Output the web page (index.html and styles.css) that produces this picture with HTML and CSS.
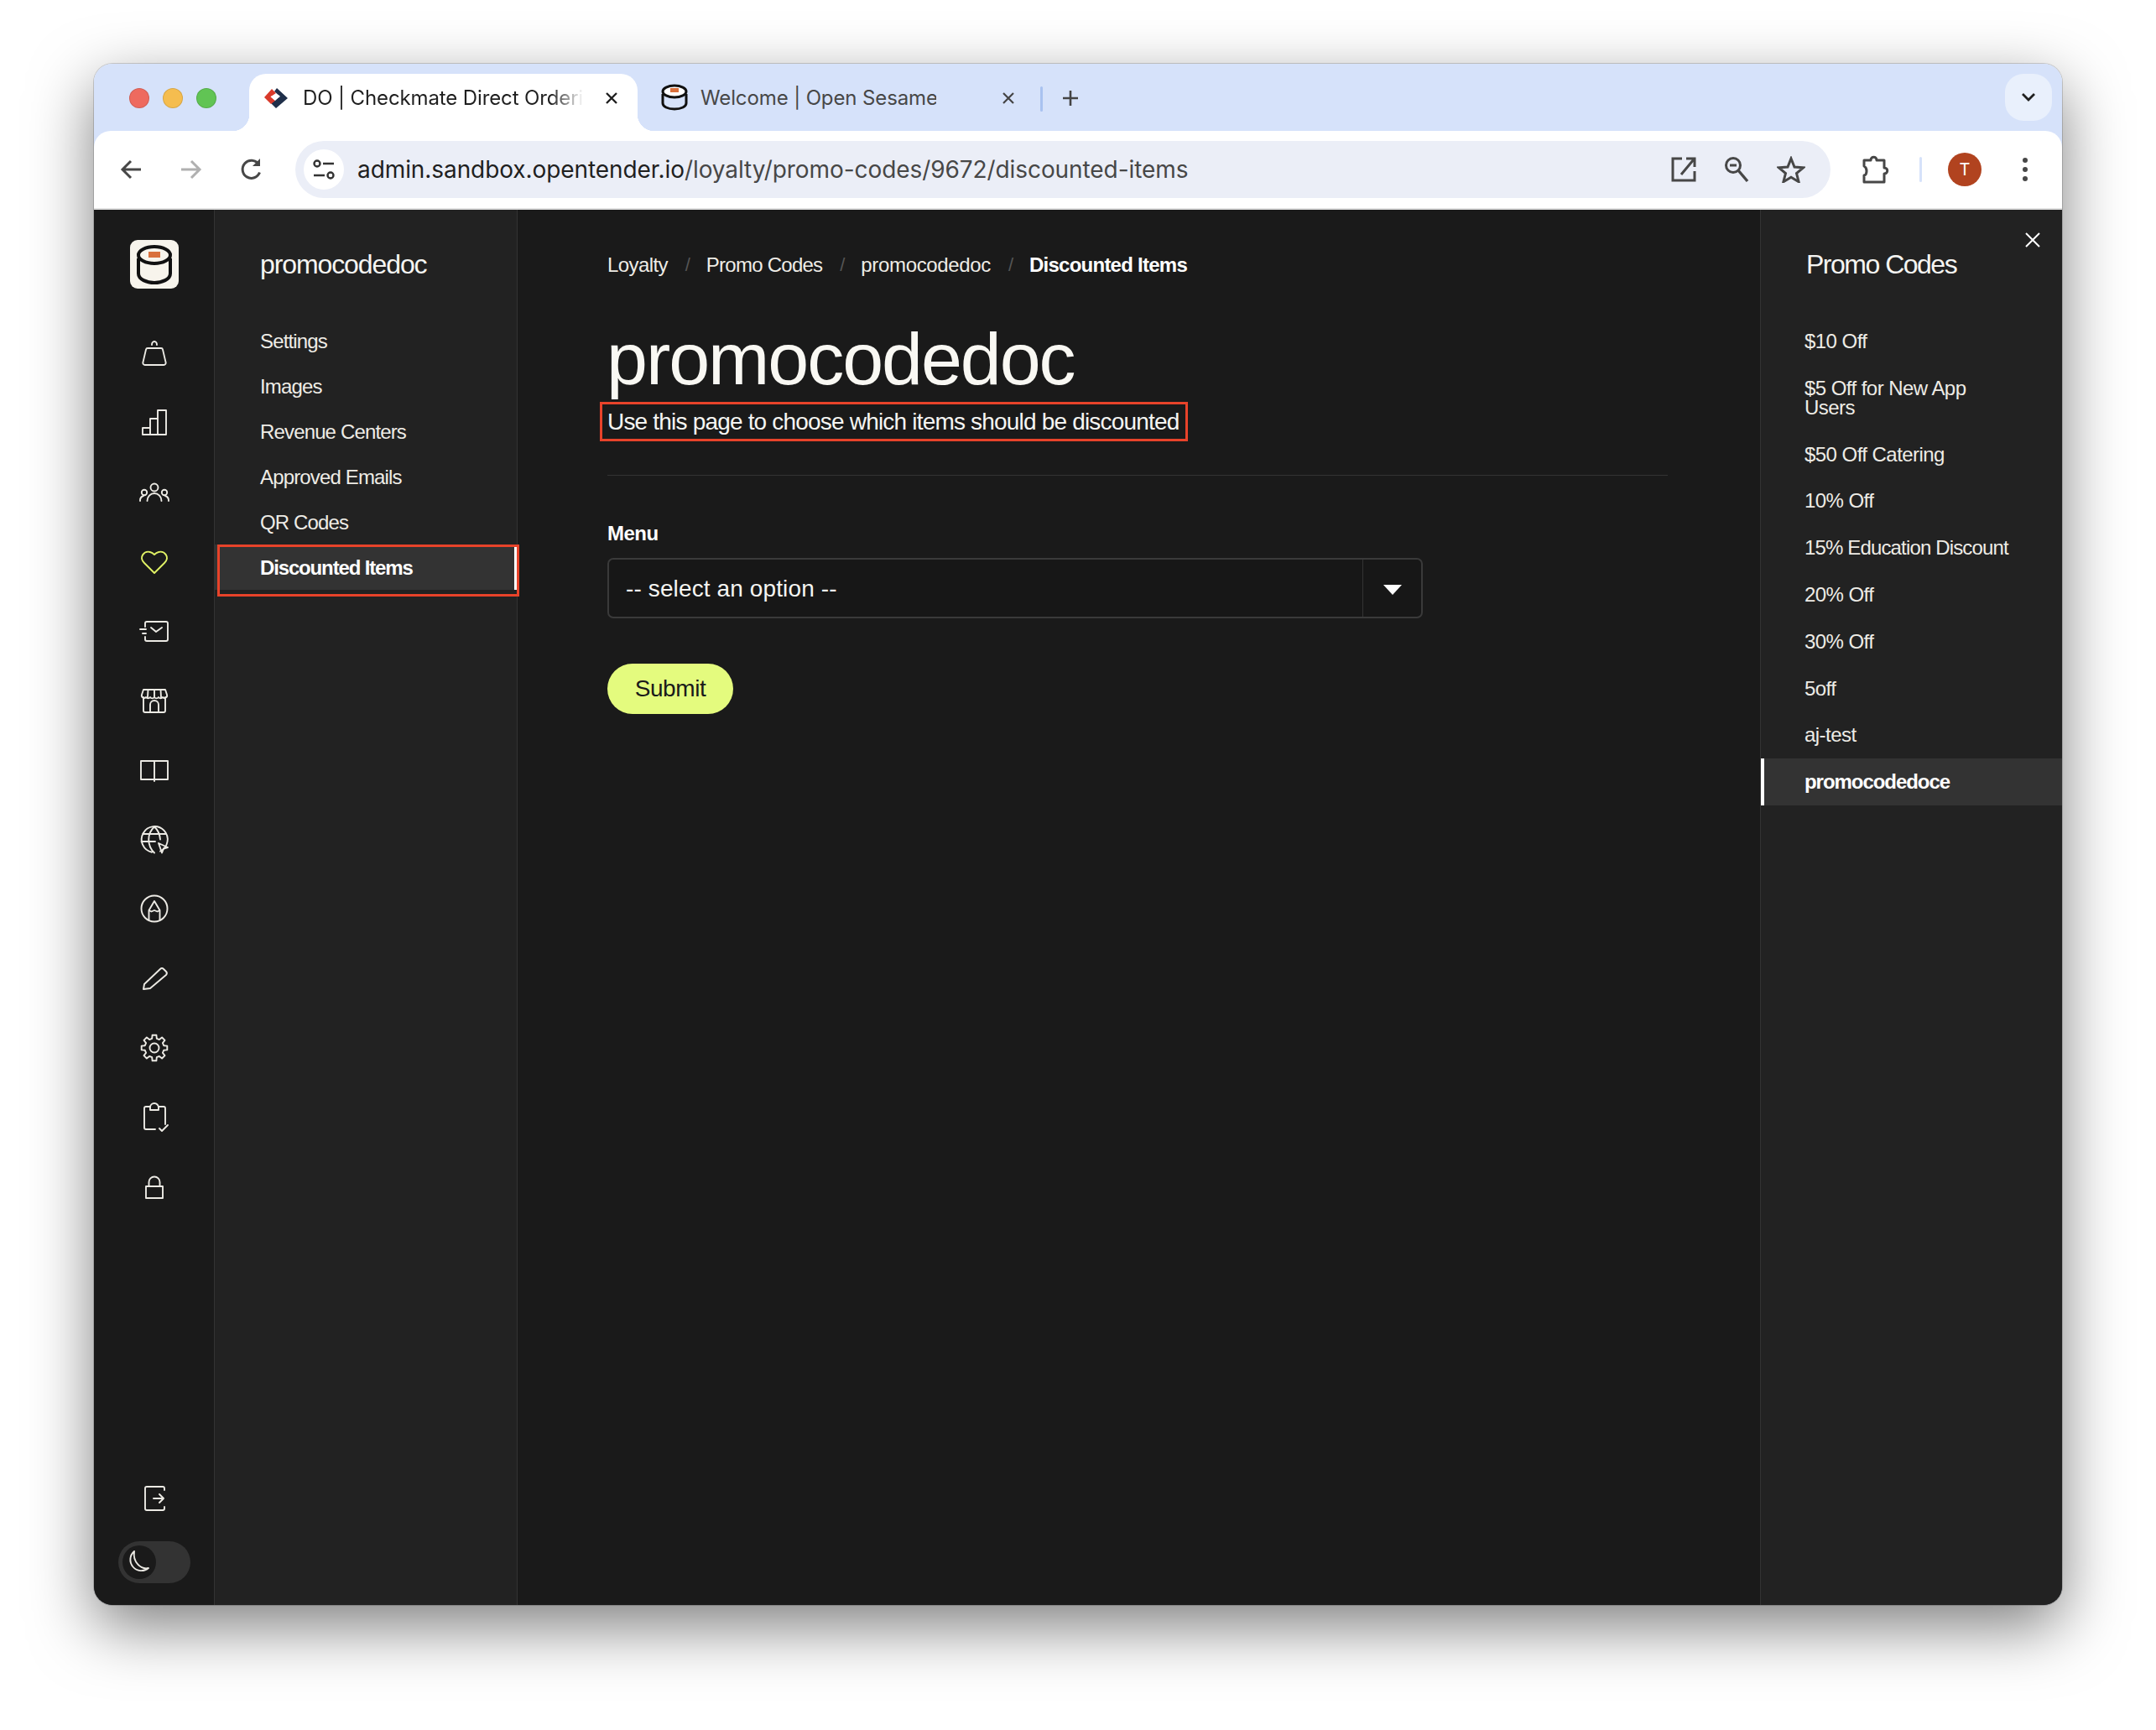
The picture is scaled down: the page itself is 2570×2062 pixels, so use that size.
FILE: index.html
```html
<!DOCTYPE html>
<html lang="en">
<head>
<meta charset="utf-8">
<title>Discounted Items</title>
<link rel="stylesheet" href="styles.css">
</head>
<body>
<div class="window">
  <header class="tabstrip">
    <div class="lights"><i class="light red"></i><i class="light yellow"></i><i class="light green"></i></div>
    <div class="tab active">
      <svg class="fav" width="28" height="26" viewBox="0 0 28 26"><path d="M15 1 28 13 14 25 8 19 19 11 12 5z" fill="#1f2f4a"/><path d="M9 2 14 7 8 11 13 16 8 20 0 12z" fill="#d93a2b"/><path d="M8 11l5 4 5-5" fill="none" stroke="#fff" stroke-width="1.500"/></svg>
      <span class="tab-title fade">DO | Checkmate Direct Orderi</span>
      <svg class="tab-x" width="16" height="16" viewBox="0 0 16 16"><path d="M2 2l12 12M14 2 2 14" stroke="#1f1f1f" stroke-width="2.400"/></svg>
    </div>
    <div class="tab">
      <svg class="fav2" width="34" height="32" viewBox="0 0 34 32"><ellipse cx="17" cy="9" rx="14" ry="7" fill="#fff" stroke="#111" stroke-width="3"/><rect x="12" y="5" width="10" height="5" fill="#d9703c"/><path d="M3 12v11c0 4 6 7 14 7s14-3 14-7V12" fill="none" stroke="#111" stroke-width="3"/></svg>
      <span class="tab-title muted">Welcome | Open Sesame</span>
      <svg class="tab-x second" width="16" height="16" viewBox="0 0 16 16"><path d="M2 2l12 12M14 2 2 14" stroke="#444" stroke-width="2.200"/></svg>
    </div>
    <i class="tab-sep"></i>
    <svg class="newtab" width="22" height="22" viewBox="0 0 22 22"><path d="M11 2v18M2 11h18" stroke="#444" stroke-width="2.600"/></svg>
    <div class="tabsearch"><svg width="20" height="14" viewBox="0 0 20 14"><path d="M3 3l7 7 7-7" fill="none" stroke="#1f1f1f" stroke-width="2.800"/></svg></div>
  </header>

  <div class="toolbar">
    <svg class="tool back" width="32" height="32" viewBox="0 0 32 32"><path d="M27 16H6M15 6 5 16l10 10" fill="none" stroke="#474747" stroke-width="3"/></svg>
    <svg class="tool fwd" width="32" height="32" viewBox="0 0 32 32"><path d="M5 16h21M17 6l10 10-10 10" fill="none" stroke="#b0b0b0" stroke-width="3"/></svg>
    <svg class="tool reload" width="32" height="32" viewBox="0 0 32 32"><path d="M25.500 19.500A10.500 10.500 0 1 1 24 9.500" fill="none" stroke="#474747" stroke-width="3"/><path d="M26 3v9h-9z" fill="#474747"/></svg>
    <div class="omnibox">
      <span class="site-chip"><svg width="28" height="26" viewBox="0 0 28 26"><circle cx="6" cy="6" r="3.500" fill="none" stroke="#333" stroke-width="2.400"/><path d="M13 6h13M2 20h13" stroke="#333" stroke-width="2.600"/><circle cx="22" cy="20" r="3.500" fill="none" stroke="#333" stroke-width="2.400"/></svg></span>
      <span class="url"><b>admin.sandbox.opentender.io</b>/loyalty/promo-codes/9672/discounted-items</span>
      <svg class="omni-icon" width="30" height="32" viewBox="0 0 30 32"><path d="M13 3H2v26h26V18M18 3h10v10M27 4 12 22" fill="none" stroke="#474747" stroke-width="3"/></svg>
      <svg class="omni-icon" width="30" height="32" viewBox="0 0 30 32"><circle cx="11" cy="11" r="8.500" fill="none" stroke="#474747" stroke-width="3"/><path d="M7 11h8" stroke="#474747" stroke-width="3"/><path d="M17 17l11 13" stroke="#474747" stroke-width="3.400"/></svg>
      <svg class="omni-icon" width="34" height="32" viewBox="0 0 34 32"><path d="M17 3l4 10 10.500.800-8 6.700 2.600 10.200L17 25.200 7.900 30.700l2.600-10.200-8-6.700L13 13z" fill="none" stroke="#474747" stroke-width="3" stroke-linejoin="miter"/></svg>
    </div>
    <svg class="tool ext" width="34" height="36" viewBox="0 0 34 36"><path d="M4 7h8c0-5 7-5 7 0h9v9c5 0 5 7 0 7v10H4v-8c4-1 4-9 0-11z" fill="none" stroke="#474747" stroke-width="3" stroke-linejoin="round"/></svg>
    <i class="tool-sep"></i>
    <span class="avatar">T</span>
    <svg class="tool kebab" width="8" height="32" viewBox="0 0 8 32"><circle cx="4" cy="5" r="3" fill="#474747"/><circle cx="4" cy="16" r="3" fill="#474747"/><circle cx="4" cy="27" r="3" fill="#474747"/></svg>
  </div>

  <div class="app">
    <nav class="rail">
      <div class="logo"><svg width="58" height="58" viewBox="0 0 58 58"><path d="M10 22v18c0 7 10 11 19 11s19-4 19-11V22" fill="none" stroke="#111" stroke-width="4"/><ellipse cx="29" cy="18" rx="19" ry="10" fill="#f7f4ec" stroke="#111" stroke-width="4"/><rect x="22" y="14" width="14" height="7" fill="#d9703c"/></svg></div>
      <div class="rail-icons">
        <svg class="ri" viewBox="0 0 40 40"><path d="M17 10a3 4 0 0 1 6 0M12 14h16a2 2 0 0 1 2 1.600l3.500 15a2.500 2.500 0 0 1-2.500 3.400H9a2.500 2.500 0 0 1-2.500-3.400l3.500-15a2 2 0 0 1 2-1.600z"/></svg>
        <svg class="ri" viewBox="0 0 40 40"><path d="M6 26h9v8H6zM15 15h9v19h-9zM24 5h10v29H24z"/></svg>
        <svg class="ri" viewBox="0 0 40 40"><circle cx="20" cy="14" r="4.500"/><path d="M11.500 30a8.500 9 0 0 1 17 0"/><circle cx="8" cy="20" r="3.200"/><path d="M3 30a6 6 0 0 1 4-6M37 30a6 6 0 0 0-4-6"/><circle cx="32" cy="20" r="3.200"/></svg>
        <svg class="ri lime" viewBox="0 0 40 40"><path d="M20 34 8 22c-7-7 0-15 7-13 2 .5 4 2 5 3 1-1 3-2.500 5-3 7-2 14 6 7 13z"/></svg>
        <svg class="ri" viewBox="0 0 40 40"><path d="M9 15v-4a2 2 0 0 1 2-2h23a2 2 0 0 1 2 2v19a2 2 0 0 1-2 2H11a2 2 0 0 1-2-2v-3M3 18h7M6 23h4M16 16l6 5 7-5"/></svg>
        <svg class="ri" viewBox="0 0 40 40"><path d="M7 16v16a2 2 0 0 0 2 2h22a2 2 0 0 0 2-2V16M15 34V25a5 5 0 0 1 10 0v9M7 7h26l2 6a3 3 0 0 1-5 3 3 3 0 0 1-5 0 3 3 0 0 1-5 0 3 3 0 0 1-5 0 3 3 0 0 1-5 0 3 3 0 0 1-5-3zM12.500 7l-.5 9M20 7v9M27.500 7l.5 9"/></svg>
        <svg class="ri" viewBox="0 0 40 40"><path d="M4 9h32v22H4zM20 9v24"/></svg>
        <svg class="ri" viewBox="0 0 40 40"><path d="M27 33.500a15.500 15.500 0 1 0-10 1.200M20 4.500c-9 8-9 22 0 31M20 4.500c4 3.500 6.500 9 7 15M6 13h28M4.500 22H21"/><path d="M25 24l11 5-5 1.500-2 5z"/></svg>
        <svg class="ri" viewBox="0 0 40 40"><circle cx="20" cy="20" r="15.500"/><path d="M13.500 34V22L20 11l6.500 11v12M13.500 22l3 1.500 3.500-1.500 3.500 1.500 3-1.500"/></svg>
        <svg class="ri" viewBox="0 0 40 40"><path d="M7 33l1-6L27 9a3 3 0 0 1 4 0l3 3a3 3 0 0 1 0 4L15 32z"/></svg>
        <svg class="ri" viewBox="0 0 40 40"><polygon points="17.200,8.800 17.600,4.700 22.400,4.700 22.800,8.800 25.900,10.100 29.100,7.500 32.500,10.900 29.900,14.100 31.200,17.200 35.300,17.600 35.300,22.400 31.200,22.800 29.900,25.900 32.500,29.100 29.100,32.500 25.900,29.900 22.800,31.200 22.400,35.300 17.600,35.300 17.200,31.200 14.100,29.900 10.900,32.500 7.500,29.100 10.100,25.900 8.800,22.800 4.700,22.400 4.700,17.600 8.800,17.200 10.100,14.100 7.500,10.900 10.900,7.500 14.100,10.100"/><circle cx="20" cy="20" r="5.500"/></svg>
        <svg class="ri" viewBox="0 0 40 40"><path d="M15 7h-5a2 2 0 0 0-2 2v23a2 2 0 0 0 2 2h11M25 7h6a2 2 0 0 1 2 2v19M15 11h10V8a5 5 0 0 0-10 0zM26 33l3 3 7-7"/></svg>
        <svg class="ri" viewBox="0 0 40 40"><path d="M10 19h20v14H10zM13.500 19v-5a6.500 6.500 0 0 1 13 0v5"/></svg>
      </div>
      <svg class="ri logout" viewBox="0 0 40 40"><path d="M32 10V8a2 2 0 0 0-2-2H11a2 2 0 0 0-2 2v24a2 2 0 0 0 2 2h19a2 2 0 0 0 2-2v-2M19 20h12M26 15l5 5-5 5"/></svg>
      <div class="toggle"><span class="knob"><svg class="ri" viewBox="2 0 40 40"><path d="M16 7A13 13 0 1 0 33 27C24 29 14 20 16 7z"/></svg></span></div>
    </nav>

    <aside class="subnav">
      <h2 class="subnav-title">promocodedoc</h2>
      <ul class="subnav-list">
        <li>Settings</li>
        <li>Images</li>
        <li>Revenue Centers</li>
        <li>Approved Emails</li>
        <li>QR Codes</li>
        <li class="current">Discounted Items<i class="mark mark-nav"></i></li>
      </ul>
    </aside>

    <main class="content">
      <div class="crumbs">
        <span>Loyalty</span><i>/</i><span class="crumb-tight">Promo Codes</span><i>/</i><span class="crumb-wide">promocodedoc</span><i>/</i><strong>Discounted Items</strong>
      </div>
      <h1 class="page-title">promocodedoc</h1>
      <p class="page-sub"><span class="sub-text">Use this page to choose which items should be discounted<i class="mark mark-sub"></i></span></p>
      <hr class="rule">
      <label class="field-label">Menu</label>
      <div class="select">
        <span class="select-value">-- select an option --</span>
        <span class="select-arrow"><svg width="22" height="12" viewBox="0 0 22 12"><path d="M0 0h22L11 12z" fill="#fff"/></svg></span>
      </div>
      <button class="submit">Submit</button>
    </main>

    <aside class="panel">
      <svg class="panel-close" width="18" height="18" viewBox="0 0 18 18"><path d="M1 1l16 16M17 1 1 17" stroke="#fff" stroke-width="2"/></svg>
      <h2 class="panel-title">Promo Codes</h2>
      <ul class="panel-list">
        <li>$10 Off</li>
        <li>$5 Off for New App Users</li>
        <li>$50 Off Catering</li>
        <li>10% Off</li>
        <li class="tight">15% Education Discount</li>
        <li>20% Off</li>
        <li>30% Off</li>
        <li>5off</li>
        <li>aj-test</li>
        <li class="current">promocodedoce</li>
      </ul>
    </aside>
  </div>
</div>
</body>
</html>
```

FILE: styles.css
```css
* { box-sizing: border-box; }
html, body { margin: 0; height: 100%; }
body {
  background: #fff;
  padding: 76px 112px 0;
  font-family: "Liberation Sans", Arial, sans-serif;
  overflow: hidden;
}
i { font-style: normal; }
ul { list-style: none; margin: 0; padding: 0; }

.window {
  width: 2346px;
  height: 1837px;
  border-radius: 22px;
  overflow: hidden;
  display: flex;
  flex-direction: column;
  background: #d6e2fa;
}
body::before {
  content: "";
  position: absolute;
  left: 112px; top: 76px;
  width: 2346px; height: 1837px;
  border-radius: 22px;
  box-shadow: 0 26px 75px rgba(0,0,0,.5), 0 0 0 1px rgba(0,0,0,.16);
  z-index: -1;
}

/* tab strip */
.tabstrip {
  height: 80px;
  flex: none;
  background: #d6e2fa;
  display: flex;
  align-items: flex-start;
  padding-top: 12px;
  font-family: Inter, "Liberation Sans", sans-serif;
}
.lights { display: flex; gap: 16px; margin: 17px 39px 0 42px; }
.light { width: 24px; height: 24px; border-radius: 50%; display: block; border: 1px solid rgba(0,0,0,.12); }
.red { background: #ee6a5f; }
.yellow { background: #f5bd4f; }
.green { background: #61c454; }

.tab {
  width: 463px;
  height: 68px;
  position: relative;
  display: flex;
  align-items: flex-start;
  padding: 14px 0 0 18px;
  border-radius: 20px 20px 0 0;
}
.tab.active { background: #fff; }
.tab.active::before, .tab.active::after {
  content: "";
  position: absolute;
  bottom: 0;
  width: 20px; height: 20px;
}
.tab.active::before { left: -20px; background: radial-gradient(circle at 0 0, transparent 20px, #fff 20.5px); }
.tab.active::after { right: -20px; background: radial-gradient(circle at 100% 0, transparent 20px, #fff 20.5px); }
.fav { flex: none; margin-right: 18px; margin-top: 2px; }
.fav2 { flex: none; margin: -2px 13px 0 9px; }
.tab-title {
  font-size: 24px;
  line-height: 30px;
  white-space: nowrap;
  overflow: hidden;
  color: #1f1f1f;
  letter-spacing: -.12px;
  flex: none;
}
.tab-title.fade {
  width: 335px;
  -webkit-mask-image: linear-gradient(90deg, #000 88%, transparent);
  mask-image: linear-gradient(90deg, #000 88%, transparent);
}
.tab-title.muted { color: #474747; width: 281px; margin-left: 1px; }
.tab-x { flex: none; margin: 7px 0 0 25px; }
.tab-x.second { margin-left: 78px; }
.tab-sep { width: 3px; height: 30px; background: #a9c2f0; margin: 15px 0 0 17px; flex: none; border-radius: 2px; }
.newtab { margin: 18px 0 0 22px; flex: none; }
.tabsearch {
  margin-left: auto;
  margin-right: 12px;
  width: 56px; height: 56px;
  border-radius: 22px;
  background: #e9f0fc;
  display: flex;
  align-items: center;
  justify-content: center;
}

/* toolbar */
.toolbar {
  height: 94px;
  flex: none;
  background: #fff;
  border-bottom: 2px solid #e0e0e0;
  border-radius: 20px 20px 0 0;
  display: flex;
  align-items: center;
  font-family: Inter, "Liberation Sans", sans-serif;
}
.tool { flex: none; }
.back { margin-left: 29px; }
.fwd { margin-left: 38px; }
.reload { margin-left: 41px; }
.omnibox {
  margin-left: 36px;
  width: 1830px;
  height: 68px;
  border-radius: 34px;
  background: #ebeef7;
  display: flex;
  align-items: center;
  padding: 0 30px 0 10px;
  gap: 33px;
}
.site-chip {
  width: 48px; height: 48px;
  border-radius: 50%;
  background: #fff;
  display: flex;
  align-items: center;
  justify-content: center;
  flex: none;
}
.url {
  font-size: 28px;
  color: #474747;
  white-space: nowrap;
  margin-left: -17px;
  margin-right: auto;
  letter-spacing: -.08px;
}
.url b { font-weight: 400; color: #1f1f1f; }
.ext { margin-left: 36px; }
.tool-sep { width: 3px; height: 30px; background: #d6e2fa; margin-left: 36px; flex: none; border-radius: 2px; }
.avatar {
  width: 40px; height: 40px;
  margin-left: 31px;
  border-radius: 50%;
  background: #b1431f;
  color: #fff;
  font-size: 20px;
  display: flex;
  align-items: center;
  justify-content: center;
  flex: none;
}
.kebab { margin-left: 48px; }

/* app */
.app {
  flex: 1;
  min-height: 0;
  display: grid;
  grid-template-columns: 144px 361px 1fr 360px;
  color: #f5f5f2;
  background: #1a1a1a;
}
.rail {
  background: #1a1a1a;
  border-right: 1px solid #333;
  display: flex;
  flex-direction: column;
  align-items: center;
  padding: 36px 0 26px;
}
.logo {
  width: 58px; height: 58px;
  background: #f7f4ec;
  border-radius: 9px;
  flex: none;
}
.logo svg { display: block; }
.rail-icons {
  margin-top: 57px;
  display: flex;
  flex-direction: column;
  gap: 42.800px;
}
.ri {
  width: 40px; height: 40px;
  display: block;
  flex: none;
  fill: none;
  stroke: #eceae4;
  stroke-width: 1.900;
  stroke-linejoin: round;
  stroke-linecap: round;
}
.ri.lime { stroke: #e0f165; }
.logout { margin-top: auto; }
.toggle {
  margin-top: 31px;
  width: 86px; height: 50px;
  border-radius: 25px;
  background: #333;
  padding: 5px;
  flex: none;
}
.knob {
  display: block;
  width: 40px; height: 40px;
  border-radius: 50%;
  background: #1a1a1a;
}

.subnav {
  background: #222;
  border-right: 1px solid #333;
  padding-top: 45px;
}
.subnav-title, .panel-title {
  margin: 0;
  font-size: 32px;
  line-height: 40px;
  font-weight: 400;
  letter-spacing: -1.100px;
  white-space: nowrap;
}
.subnav-title { padding-left: 54px; }
.subnav-list { margin-top: 44px; }
.subnav-list li {
  height: 54px;
  line-height: 56px;
  padding-left: 54px;
  font-size: 24px;
  letter-spacing: -.85px;
  color: #eeece6;
  position: relative;
}
.subnav-list li.current {
  background: #333;
  font-weight: 700;
  color: #fff;
  border-right: 3px solid #fff;
  letter-spacing: -1.150px;
}
.mark {
  position: absolute;
  border: 3.500px solid #e8432a;
  display: block;
  pointer-events: none;
}
.mark-nav { left: 3px; right: -6px; top: 0; bottom: -8px; }

.content { padding: 51px 110px 0 107px; min-width: 0; background: #1a1a1a; }
.crumbs {
  display: flex;
  align-items: center;
  height: 30px;
  font-size: 24px;
  letter-spacing: -.6px;
  color: #eeece6;
  white-space: nowrap;
}
.crumbs i { color: #555; margin: 0 19.500px 0 21px; font-size: 22px; }
.crumb-tight { letter-spacing: -.75px; }
.crumb-wide { letter-spacing: -.35px; }
.crumbs strong { color: #fff; letter-spacing: -.75px; }
.page-title {
  margin: 53px 0 0 -1px;
  font-size: 88px;
  line-height: 88px;
  font-weight: 400;
  letter-spacing: -2.050px;
  color: #f9f8f3;
  white-space: nowrap;
}
.page-sub {
  margin: 13px 0 0;
  font-size: 28px;
  line-height: 36px;
  color: #f5f5f2;
}
.sub-text { display: inline-block; position: relative; letter-spacing: -.81px; white-space: nowrap; }
.mark-sub { left: -9px; right: -10px; top: -6px; bottom: -5px; }
.rule { border: 0; height: 1px; background: #333; margin: 45px 0 0; }
.field-label {
  display: block;
  margin-top: 54px;
  font-size: 24px;
  line-height: 30px;
  font-weight: 700;
  letter-spacing: -.5px;
  color: #fff;
}
.select {
  margin-top: 14px;
  width: 972px;
  height: 72px;
  border: 2px solid #3a3a3a;
  border-radius: 7px;
  display: flex;
  align-items: center;
  background: #171717;
}
.select-value {
  flex: 1;
  padding: 2px 0 0 20px;
  font-size: 28px;
  letter-spacing: .12px;
  color: #f5f5f2;
}
.select-arrow {
  width: 70px;
  height: 100%;
  padding-top: 4px;
  border-left: 1px solid #333;
  display: flex;
  align-items: center;
  justify-content: center;
}
.submit {
  display: block;
  margin-top: 54px;
  width: 150px;
  height: 60px;
  border: 0;
  border-radius: 30px;
  background: #e4fb7e;
  color: #1a1a1a;
  font: 400 28px "Liberation Sans", Arial, sans-serif;
  letter-spacing: -.4px;
  padding: 0;
}

.panel {
  background: #222;
  border-left: 1px solid #333;
  padding-top: 45px;
  position: relative;
}
.panel-close { position: absolute; left: 315px; top: 27px; }
.panel-title { padding-left: 54px; letter-spacing: -1.500px; }
.panel-list { margin-top: 44px; }
.panel-list li {
  padding: 16px 50px 16.800px 52px;
  font-size: 24px;
  line-height: 23px;
  letter-spacing: -.55px;
  color: #eeece6;
}
.panel-list li.tight { letter-spacing: -.85px; }
.panel-list li.current {
  background: #333;
  border-left: 4px solid #fff;
  padding-left: 48px;
  font-weight: 700;
  color: #fff;
  letter-spacing: -1.050px;
}
```
